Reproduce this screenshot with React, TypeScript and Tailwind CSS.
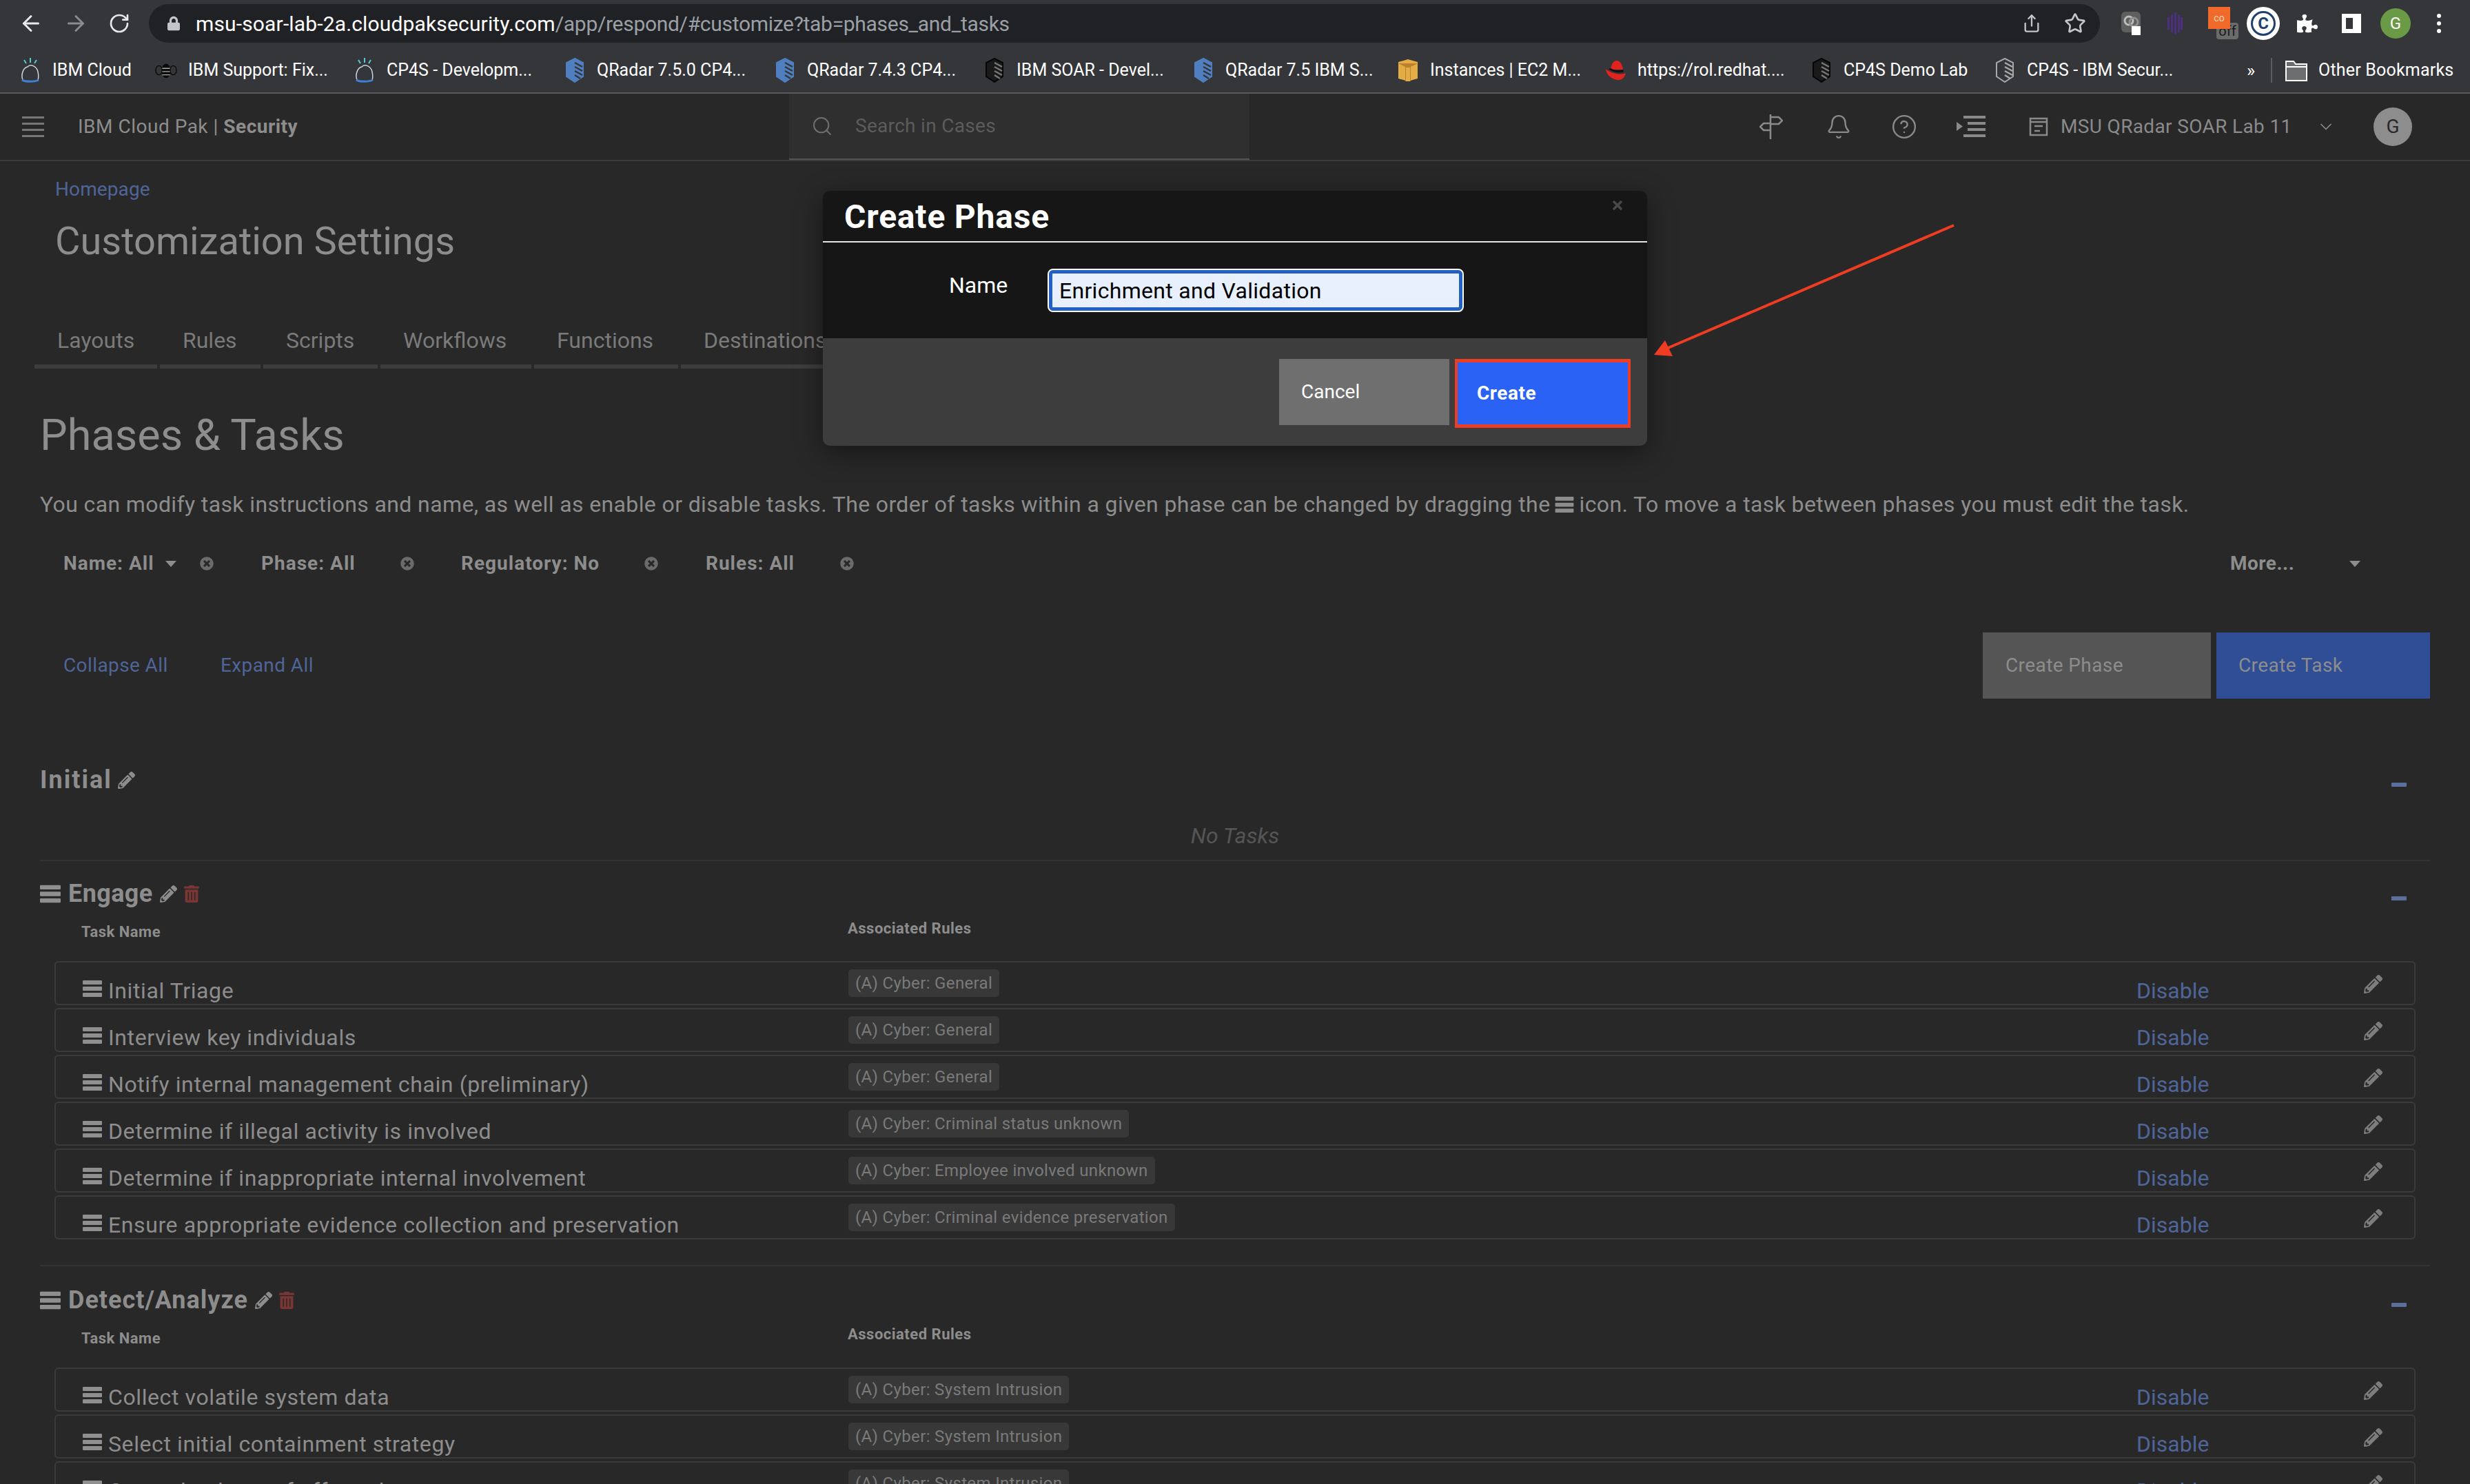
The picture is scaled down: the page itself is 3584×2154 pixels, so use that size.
import { ArrowLeft, ArrowRight, Bell, ChevronDown, CircleHelp, RotateCw, Search, Share, Star } from "lucide-react";
import { FaLock, FaPencilAlt, FaPuzzlePiece, FaTimes, FaTimesCircle, FaTrashAlt } from "react-icons/fa";

function Bars({ className }: { className: string }) {
  return (
    <svg viewBox="0 0 28 24" className={className} fill="currentColor">
      <rect x="0" y="0" width="28" height="6" rx="1" />
      <rect x="0" y="9" width="28" height="6" rx="1" />
      <rect x="0" y="18" width="28" height="6" rx="1" />
    </svg>
  );
}

function CloudIcon() {
  return (
    <svg viewBox="0 0 32 36" className="w-[32px] h-[36px]" fill="none">
      <path d="M5 32C2 24 6 14 12 13C16 8 25 12 27 20C28 25 28 29 27 32" stroke="#c9d6de" strokeWidth="1.5" />
      <path d="M4 32C8 35 23 35 28 32" stroke="#3f7fd4" strokeWidth="3" />
      <path d="M16 0V7M7 3L10 8M25 3L22 8" stroke="#5cc8d6" strokeWidth="2" />
    </svg>
  );
}

function BeeIcon() {
  return (
    <svg viewBox="0 0 34 28" className="w-[34px] h-[28px]" fill="#0b0b0b">
      <ellipse cx="17" cy="15" rx="7" ry="11" />
      <ellipse cx="6" cy="14" rx="5" ry="7" fill="none" stroke="#0b0b0b" strokeWidth="1.5" />
      <ellipse cx="28" cy="14" rx="5" ry="7" fill="none" stroke="#0b0b0b" strokeWidth="1.5" />
      <path d="M11 11H23M11 16H23M11 21H23" stroke="#aaa" strokeWidth="1.5" />
    </svg>
  );
}

function ShieldIcon({ fill, stroke, stripe }: { fill: string; stroke: string; stripe: string }) {
  return (
    <svg viewBox="0 0 26 36" className="w-[26px] h-[36px]">
      <path d="M13 1L25 7V27L13 35L1 27V7Z" fill={fill} stroke={stroke} strokeWidth="2" />
      <path d="M13 7L24 13M13 13L24 19M13 19L24 25M13 25L21 30" stroke={stripe} strokeWidth="2.5" />
    </svg>
  );
}

function BoxIcon() {
  return (
    <svg viewBox="0 0 28 32" className="w-[28px] h-[32px]">
      <path d="M0 4L14 0L28 4V28L14 32L0 28Z" fill="#e4ac44" />
      <path d="M0 6H28L18 11V32H10V11Z" fill="#b9812b" />
      <path d="M11 12H17V32H11Z" fill="#e4ac44" />
    </svg>
  );
}

function HatIcon() {
  return (
    <svg viewBox="0 0 32 32" className="w-[32px] h-[32px]">
      <path d="M9 15C10 7 13 2 18 2C23 2 26 8 27 15Z" fill="#e0231c" />
      <path d="M2 14C8 20 24 24 31 20C29 28 24 31 18 30C9 28 2 21 2 14Z" fill="#e0231c" />
      <path d="M6 14C12 19 22 21 28 18L27 15C20 17 13 16 9 13Z" fill="#111" />
    </svg>
  );
}

function FolderIcon() {
  return (
    <svg viewBox="0 0 32 32" className="w-[32px] h-[32px]">
      <path d="M1 3H12L15 7H31V31H1Z" fill="#6d6e70" stroke="#fff" strokeWidth="2" />
      <path d="M1 11H31" stroke="#fff" strokeWidth="2" />
    </svg>
  );
}

const bookmarks = [
  { label: "IBM Cloud", icon: <CloudIcon />, box: "w-[197px]", text: "w-[121px]" },
  { label: "IBM Support: Fix...", icon: <BeeIcon />, box: "w-[288px]", text: "w-[210px]" },
  { label: "CP4S - Developm...", icon: <CloudIcon />, box: "w-[305px]", text: "w-[224px]" },
  { label: "QRadar 7.5.0 CP4...", icon: <ShieldIcon fill="#4f7fc0" stroke="#4f7fc0" stripe="#35363a" />, box: "w-[305px]", text: "w-[226px]" },
  { label: "QRadar 7.4.3 CP4...", icon: <ShieldIcon fill="#4f7fc0" stroke="#4f7fc0" stripe="#35363a" />, box: "w-[304px]", text: "w-[226px]" },
  { label: "IBM SOAR - Devel...", icon: <ShieldIcon fill="#1a1a1a" stroke="#050505" stripe="#777" />, box: "w-[303px]", text: "w-[226px]" },
  { label: "QRadar 7.5 IBM S...", icon: <ShieldIcon fill="#4f7fc0" stroke="#4f7fc0" stripe="#35363a" />, box: "w-[297px]", text: "w-[222px]" },
  { label: "Instances | EC2 M...", icon: <BoxIcon />, box: "w-[301px]", text: "w-[224px]" },
  { label: "https://rol.redhat....", icon: <HatIcon />, box: "w-[299px]", text: "w-[222px]" },
  { label: "CP4S Demo Lab", icon: <ShieldIcon fill="#1a1a1a" stroke="#050505" stripe="#777" />, box: "w-[266px]", text: "w-[190px]" },
  { label: "CP4S - IBM Secur...", icon: <ShieldIcon fill="#35363a" stroke="#a8a8a8" stripe="#a8a8a8" />, box: "w-[367px]", text: "w-[226px]" },
];

const tabs = [
  { label: "Layouts", box: "w-[178px]" },
  { label: "Rules", box: "w-[146px]" },
  { label: "Scripts", box: "w-[166px]" },
  { label: "Workflows", box: "w-[219px]" },
  { label: "Functions", box: "w-[209px]" },
  { label: "Destinations", box: "w-[300px]" },
];

const engageTasks = [
  { name: "Initial Triage", rule: "(A) Cyber: General" },
  { name: "Interview key individuals", rule: "(A) Cyber: General" },
  { name: "Notify internal management chain (preliminary)", rule: "(A) Cyber: General" },
  { name: "Determine if illegal activity is involved", rule: "(A) Cyber: Criminal status unknown" },
  { name: "Determine if inappropriate internal involvement", rule: "(A) Cyber: Employee involved unknown" },
  { name: "Ensure appropriate evidence collection and preservation", rule: "(A) Cyber: Criminal evidence preservation" },
];

const detectTasks = [
  { name: "Collect volatile system data", rule: "(A) Cyber: System Intrusion" },
  { name: "Select initial containment strategy", rule: "(A) Cyber: System Intrusion" },
  { name: "Create backups of affected systems", rule: "(A) Cyber: System Intrusion" },
];

function TaskRow({ name, rule }: { name: string; rule: string }) {
  return (
    <div className="flex h-[64px] w-full shrink-0 rounded-[6px] border-2 border-[#3a3a3a]">
      <div className="flex w-[1150px] shrink-0 items-start gap-[9px] pl-[39px] pt-[23px] text-[32px] leading-[36px] tracking-[0.6px] text-[#8d8d8d]">
        <Bars className="mt-[3px] w-[28px] h-[24px] shrink-0 text-[#8f8f8f]" />
        <span className="whitespace-nowrap">{name}</span>
      </div>
      <div className="w-[1869px] shrink-0 pt-[10px]">
        <span className="inline-flex h-[40px] items-center rounded-[5px] bg-[#383838] px-[10px] text-[24px] tracking-[0.35px] text-[#7a7a7a] whitespace-nowrap">{rule}</span>
      </div>
      <div className="w-[330px] pt-[23px] text-[32px] leading-[36px] text-[#4f6598]">Disable</div>
      <FaPencilAlt className="mt-[18px] h-[27px] w-[27px] text-[#7d7d7d]" />
    </div>
  );
}

function Phase({ title, titleClass, tasks, mt, assocMt }: { title: string; titleClass: string; tasks: { name: string; rule: string }[]; mt: string; assocMt: string }) {
  return (
    <section className={mt}>
      <div className="flex h-[40px] items-center justify-between pr-[34px]">
        <div className="flex items-center text-[#8d8d8d]">
          <Bars className="mr-[11px] w-[30px] h-[27px] text-[#8f8f8f]" />
          <span className={`text-[36px] font-bold leading-[40px] ${titleClass}`}>{title}</span>
          <FaPencilAlt className="ml-[10px] h-[25px] w-[25px]" />
          <FaTrashAlt className="ml-[10px] h-[25px] w-[22px] text-[#7a3535]" />
        </div>
        <div className="mt-[14px] h-[6px] w-[22px] rounded-[1px] bg-[#5a6f9c]" />
      </div>
      <div className="flex h-[78px] pl-[60px] text-[22px] font-bold leading-[20px] tracking-[0.5px] text-[#8d8d8d]">
        <div className="mt-[26px] w-[1112px]">Task Name</div>
        <div className={assocMt}>Associated Rules</div>
      </div>
      <div className="ml-[21px] flex w-[3426px] flex-col gap-[4px]">
        {tasks.map((t) => (
          <TaskRow key={t.name} name={t.name} rule={t.rule} />
        ))}
      </div>
    </section>
  );
}

export default function App() {
  return (
    <div className="relative h-[2154px] w-[3584px] overflow-hidden bg-[#282828] font-['Roboto',sans-serif]">
      {/* Browser toolbar */}
      <div className="flex h-[62px] items-start bg-[#35363a] pt-[6px]">
        <div className="flex h-[56px] w-[216px] shrink-0 items-center pl-[27px] text-[#e8e8e8]">
          <ArrowLeft className="h-[36px] w-[36px]" strokeWidth={2} />
          <ArrowRight className="ml-[29px] h-[36px] w-[36px] text-[#8a8b8d]" strokeWidth={2} />
          <RotateCw className="ml-[29px] h-[32px] w-[32px]" strokeWidth={2} />
        </div>
        <div className="flex h-[56px] w-[2831px] shrink-0 items-center rounded-full bg-[#202124] pl-[27px] pr-[20px]">
          <FaLock className="h-[24px] w-[18px] text-[#c4c5c7]" />
          <div className="ml-[23px] flex-1 whitespace-nowrap text-[30px] tracking-[0.15px] text-white">
            msu-soar-lab-2a.cloudpaksecurity.com<span className="tracking-[-0.3px] text-[#9aa0a6]">/app/respond/#customize?tab=phases_and_tasks</span>
          </div>
          <Share className="h-[32px] w-[28px] text-[#c4c5c7]" strokeWidth={2} />
          <Star className="ml-[33px] h-[32px] w-[32px] text-[#c4c5c7]" strokeWidth={2} />
        </div>
        <div className="flex h-[56px] flex-1 items-center pl-[31px]">
          <svg viewBox="0 0 28 34" className="h-[34px] w-[28px]">
            <rect x="0" y="0" width="28" height="30" rx="6" fill="#5f5f5f" />
            <circle cx="11" cy="13" r="6" fill="none" stroke="#bdbdbd" strokeWidth="3" />
            <circle cx="18" cy="15" r="6" fill="none" stroke="#8f8f8f" strokeWidth="3" />
            <rect x="15" y="21" width="13" height="13" fill="#fff" />
          </svg>
          <svg viewBox="0 0 22 32" className="ml-[39px] h-[32px] w-[22px]" fill="#4d2f80">
            <rect x="0" y="7" width="3" height="18" />
            <rect x="5" y="3" width="3" height="26" />
            <rect x="10" y="0" width="3" height="32" />
            <rect x="15" y="3" width="3" height="26" />
            <rect x="19" y="7" width="3" height="18" />
          </svg>
          <div className="ml-[37px] flex h-[32px] w-[32px] -translate-y-[8px] items-center justify-center bg-[#f26a2b] text-[14px] leading-none text-[#ffd9c0]">co</div>
          <div className="-ml-[20px] mt-[22px] flex h-[24px] w-[32px] items-center justify-center rounded-[4px] bg-[#6b6b6b] text-[20px] leading-none text-[#1b1b1b]">off</div>
          <div className="ml-[12px] flex h-[48px] w-[48px] items-center justify-center rounded-full bg-white">
            <div className="flex h-[36px] w-[36px] items-center justify-center rounded-full border-[3px] border-[#21406e] text-[24px] font-bold leading-none text-[#21406e]">C</div>
          </div>
          <FaPuzzlePiece className="ml-[25px] h-[30px] w-[30px] text-white" />
          <div className="ml-[35px] h-[28px] w-[28px] border-[6px] border-r-[12px] border-white" />
          <div className="ml-[28px] flex h-[44px] w-[44px] items-center justify-center rounded-full bg-[#6b9a46] text-[24px] text-white">G</div>
          <div className="ml-[38px] flex flex-col gap-[5px]">
            <div className="h-[6px] w-[6px] rounded-full bg-white" />
            <div className="h-[6px] w-[6px] rounded-full bg-white" />
            <div className="h-[6px] w-[6px] rounded-full bg-white" />
          </div>
        </div>
      </div>

      {/* Bookmarks bar */}
      <div className="flex h-[74px] items-center border-b-2 border-[#5c5c5e] bg-[#35363a] pt-[8px] pl-[28px] text-[25px] text-white">
        {bookmarks.map((b) => (
          <div key={b.label} className={`${b.box} flex shrink-0 items-center gap-[16px]`}>
            <div className="flex w-[32px] shrink-0 justify-center">{b.icon}</div>
            <span className={`${b.text} shrink-0 whitespace-nowrap`}>{b.label}</span>
          </div>
        ))}
        <span className="w-[35px] shrink-0 text-[26px]">»</span>
        <div className="h-[36px] w-[2px] shrink-0 bg-[#5c5c5e]" />
        <div className="ml-[19px] flex shrink-0 items-center gap-[16px]">
          <FolderIcon />
          <span className="whitespace-nowrap tracking-[0.2px]">Other Bookmarks</span>
        </div>
      </div>

      {/* App header */}
      <header className="flex h-[98px] items-center border-b-2 border-[#3a3a3a] bg-[#282828]">
        <div className="ml-[32px] flex w-[32px] flex-col gap-[6px]">
          <div className="h-[3px] bg-[#777]" />
          <div className="h-[3px] bg-[#777]" />
          <div className="h-[3px] bg-[#777]" />
          <div className="h-[3px] bg-[#777]" />
        </div>
        <div className="ml-[49px] w-[1032px] text-[28px] tracking-[0.5px] text-[#8d8d8d]">
          IBM Cloud Pak | <span className="font-bold">Security</span>
        </div>
        <div className="flex h-full w-[668px] items-center border-b-2 border-[#555] bg-[#2f2f2f] pl-[32px] text-[28px] tracking-[0.3px] text-[#5c5c5c]">
          <Search className="h-[32px] w-[32px] text-[#707070]" strokeWidth={1.5} />
          <span className="ml-[32px]">Search in Cases</span>
        </div>
        <div className="ml-[740px] flex items-center text-[#8a8a8a]">
          <svg viewBox="0 0 34 36" className="h-[36px] w-[34px]" fill="none" stroke="currentColor" strokeWidth="2.5">
            <path d="M16 0V36M16 4H28L33 9L28 14H16M16 13H6L1 18L6 23H16" />
          </svg>
          <Bell className="ml-[62px] h-[38px] w-[38px]" strokeWidth={1.5} />
          <CircleHelp className="ml-[57px] h-[38px] w-[38px]" strokeWidth={1.5} />
          <svg viewBox="0 0 42 32" className="ml-[57px] h-[32px] w-[42px]" fill="currentColor">
            <rect x="10" y="0" width="32" height="4" />
            <rect x="16" y="9" width="26" height="4" />
            <rect x="16" y="18" width="26" height="4" />
            <rect x="10" y="27" width="32" height="4" />
            <path d="M0 9L9 15.5L0 22Z" />
          </svg>
          <svg viewBox="0 0 28 28" className="ml-[63px] h-[28px] w-[28px]" fill="none" stroke="currentColor" strokeWidth="2.5">
            <rect x="2" y="2" width="24" height="24" />
            <path d="M2 7H26M8 13H20M8 20H16" />
          </svg>
          <span className="ml-[18px] w-[371px] whitespace-nowrap text-[28px] tracking-[0.35px]">MSU QRadar SOAR Lab 11</span>
          <ChevronDown className="h-[28px] w-[28px]" strokeWidth={1.5} />
          <div className="ml-[55px] flex h-[56px] w-[56px] items-center justify-center rounded-full bg-[#8d8d8d] text-[28px] text-[#282828]">G</div>
        </div>
      </header>

      {/* Page */}
      <main>
        <div className="ml-[80px] flex h-[82px] items-center text-[28px] tracking-[0.1px] text-[#4f6598]">Homepage</div>
        <h1 className="ml-[80px] flex h-[68px] items-center text-[56px] text-[#8d8d8d]">Customization Settings</h1>

        <div className="ml-[50px] mt-[75px] flex gap-[4px]">
          {tabs.map((t) => (
            <div key={t.label} className={`${t.box} flex h-[76px] shrink-0 items-center border-b-[6px] border-[#3d3d3d] pl-[33px] text-[32px] text-[#7a7a7a]`}>
              {t.label}
            </div>
          ))}
        </div>

        <h2 className="ml-[58px] mt-[57px] flex h-[80px] items-center text-[63px] text-[#8d8d8d]">Phases &amp; Tasks</h2>

        <p className="ml-[58px] mt-[40px] flex h-[40px] items-center whitespace-nowrap text-[32px] tracking-[0.38px] text-[#8d8d8d]">
          You can modify task instructions and name, as well as enable or disable tasks. The order of tasks within a given phase can be changed by dragging the
          <Bars className="mx-[7px] h-[23px] w-[28px]" />
          icon. To move a task between phases you must edit the task.
        </p>

        <div className="mt-[46px] flex h-[40px] items-center text-[28px] font-bold tracking-[1px] text-[#8d8d8d]">
          <span className="ml-[92px] w-[148px]">Name: All</span>
          <div className="h-0 w-0 border-x-[8px] border-t-[9px] border-x-transparent border-t-[#8d8d8d]" />
          <FaTimesCircle className="ml-[34px] h-[20px] w-[20px] text-[#6b6b6b]" />
          <span className="ml-[69px] w-[202px]">Phase: All</span>
          <FaTimesCircle className="h-[20px] w-[20px] text-[#6b6b6b]" />
          <span className="ml-[68px] w-[266px]">Regulatory: No</span>
          <FaTimesCircle className="h-[20px] w-[20px] text-[#6b6b6b]" />
          <span className="ml-[69px] w-[195px]">Rules: All</span>
          <FaTimesCircle className="h-[20px] w-[20px] text-[#6b6b6b]" />
          <span className="ml-[1997px] w-[173px] tracking-[0.5px]">More...</span>
          <div className="h-0 w-0 border-x-[8px] border-t-[9px] border-x-transparent border-t-[#8d8d8d]" />
        </div>

        <div className="mt-[80px] flex h-[96px] items-center pl-[92px] pr-[58px] text-[28px] tracking-[0.4px]">
          <span className="w-[228px] text-[#4f6598]">Collapse All</span>
          <span className="text-[#4f6598]">Expand All</span>
          <div className="ml-auto flex h-full items-center bg-[#555555] w-[331px] pl-[33px] text-[#8d8d8d]">Create Phase</div>
          <div className="ml-[8px] flex h-full items-center bg-[#2f4e96] w-[310px] pl-[32px] text-[#8d8d8d]">Create Task</div>
        </div>

        <div className="ml-[58px] w-[3468px]">
          <section className="mt-[98px]">
            <div className="flex h-[40px] items-center justify-between pr-[34px] text-[#8d8d8d]">
              <div className="flex items-center">
                <span className="text-[36px] font-bold leading-[40px] tracking-[2px]">Initial</span>
                <FaPencilAlt className="ml-[8px] h-[25px] w-[25px]" />
              </div>
              <div className="mt-[14px] h-[6px] w-[22px] rounded-[1px] bg-[#5a6f9c]" />
            </div>
            <div className="mt-[41px] flex h-[40px] items-center justify-center text-[32px] italic text-[#555]">No Tasks</div>
            <div className="mt-[15px] h-[2px] bg-[#333]" />
          </section>

          <Phase title="Engage" titleClass="tracking-[0.4px]" tasks={engageTasks} mt="mt-[27px]" assocMt="mt-[21px]" />
          <div className="mt-[37px] h-[2px] bg-[#333]" />
          <Phase title="Detect/Analyze" titleClass="tracking-[1px]" tasks={detectTasks} mt="mt-[29px]" assocMt="mt-[20px]" />
        </div>
      </main>

      {/* Modal */}
      <div className="absolute left-[1194px] top-[277px] flex h-[370px] w-[1196px] flex-col overflow-hidden rounded-[10px] shadow-[0_10px_40px_rgba(0,0,0,0.45)]">
        <div className="relative flex h-[75px] shrink-0 items-center border-b-2 border-[#e5e5e5] bg-[#161616] pl-[31px] pt-[2px] text-[48px] font-bold tracking-[0.8px] text-white">
          Create Phase
          <FaTimes className="absolute right-[34px] top-[11px] h-[20px] w-[18px] text-[#484848]" />
        </div>
        <div className="flex h-[139px] shrink-0 items-start bg-[#161616] pl-[183px] pt-[40px]">
          <span className="mt-[2px] w-[145px] text-[32px] leading-[40px] text-white">Name</span>
          <div className="flex h-[59px] w-[600px] items-center rounded-[6px] border-[5px] border-[#2260c4] bg-[#e8f0fe] pl-[10px] text-[32px] tracking-[0.3px] text-black outline-2 outline-white">
            Enrichment and Validation
          </div>
        </div>
        <div className="flex flex-1 items-start justify-end bg-[#3d3d3d] pr-[24px] pt-[30px] text-[28px]">
          <div className="flex h-[96px] w-[247px] items-center bg-[#6f6f6f] pl-[32px] text-white">Cancel</div>
          <div className="ml-[8px] flex h-[100px] w-[255px] items-center border-x-[4px] border-y-[5px] border-[#ee3d23] bg-[#2962f5] pl-[28px] font-bold tracking-[0.5px] text-white">Create</div>
        </div>
      </div>

      {/* Annotation arrow */}
      <svg viewBox="0 0 450 210" className="absolute left-[2390px] top-[320px] h-[210px] w-[450px]">
        <path d="M445 7L28 186" stroke="#ee3d23" strokeWidth="4" fill="none" />
        <path d="M10 195L26 174L37 197Z" fill="#ee3d23" />
      </svg>
    </div>
  );
}
